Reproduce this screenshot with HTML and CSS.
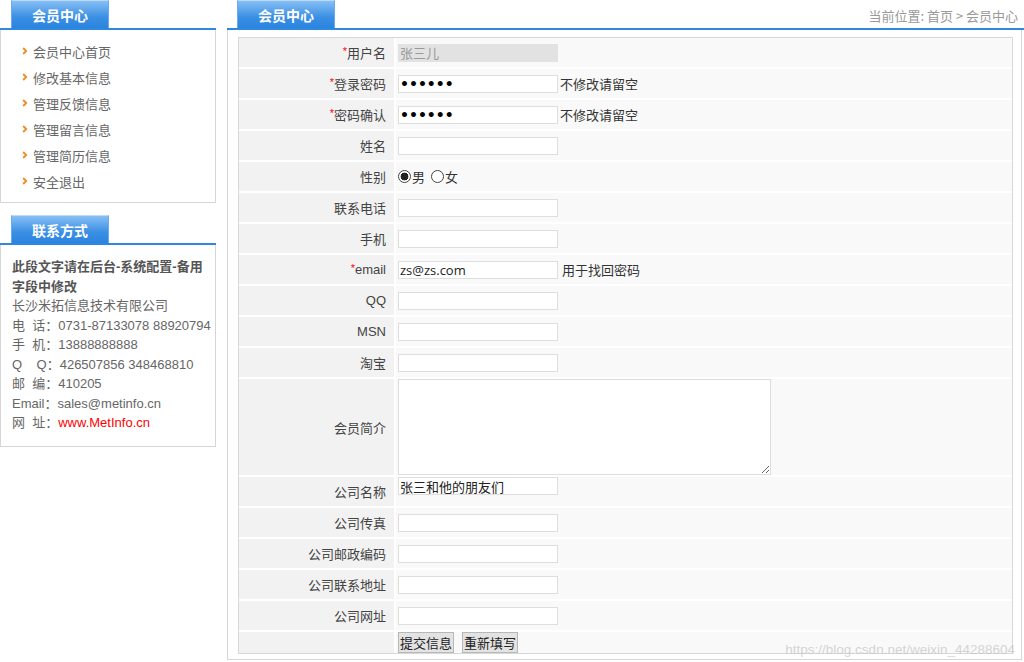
FILE: index.html
```html
<!DOCTYPE html>
<html lang="zh-CN">
<head>
<meta charset="utf-8">
<title>会员中心</title>
<link rel="stylesheet" href="styles.css">
</head>
<body>
<div class="page">
  <aside class="sidebar">
    <section class="panel">
      <div class="panel-head"><span class="tab">会员中心</span></div>
      <ul class="menu">
        <li><svg class="arrow" viewBox="0 0 6 8" width="6" height="8"><path d="M1.2 1 L4.2 4 L1.2 7" fill="none" stroke="#f08a1e" stroke-width="1.8"/></svg>会员中心首页</li>
        <li><svg class="arrow" viewBox="0 0 6 8" width="6" height="8"><path d="M1.2 1 L4.2 4 L1.2 7" fill="none" stroke="#f08a1e" stroke-width="1.8"/></svg>修改基本信息</li>
        <li><svg class="arrow" viewBox="0 0 6 8" width="6" height="8"><path d="M1.2 1 L4.2 4 L1.2 7" fill="none" stroke="#f08a1e" stroke-width="1.8"/></svg>管理反馈信息</li>
        <li><svg class="arrow" viewBox="0 0 6 8" width="6" height="8"><path d="M1.2 1 L4.2 4 L1.2 7" fill="none" stroke="#f08a1e" stroke-width="1.8"/></svg>管理留言信息</li>
        <li><svg class="arrow" viewBox="0 0 6 8" width="6" height="8"><path d="M1.2 1 L4.2 4 L1.2 7" fill="none" stroke="#f08a1e" stroke-width="1.8"/></svg>管理简历信息</li>
        <li><svg class="arrow" viewBox="0 0 6 8" width="6" height="8"><path d="M1.2 1 L4.2 4 L1.2 7" fill="none" stroke="#f08a1e" stroke-width="1.8"/></svg>安全退出</li>
      </ul>
    </section>
    <section class="panel panel-contact">
      <div class="panel-head"><span class="tab">联系方式</span></div>
      <div class="contact">
        <p class="contact-note">此段文字请在后台-系统配置-备用字段中修改</p>
        <p>长沙米拓信息技术有限公司</p>
        <p class="nowrap">电&nbsp;&nbsp;话：0731-87133078 88920794</p>
        <p class="nowrap">手&nbsp;&nbsp;机：13888888888</p>
        <p class="nowrap">Q&nbsp;&nbsp;&nbsp;&nbsp;Q：426507856 348468810</p>
        <p class="nowrap">邮&nbsp;&nbsp;编：410205</p>
        <p class="nowrap">Email：sales@metinfo.cn</p>
        <p class="nowrap">网&nbsp;&nbsp;址：<span class="link">www.MetInfo.cn</span></p>
      </div>
    </section>
  </aside>

  <main class="main">
    <div class="main-head">
      <span class="tab">会员中心</span>
      <span class="crumb">当前位置: 首页 &gt; 会员中心</span>
    </div>
    <div class="main-box">
      <form class="form-grid">
        <div class="lbl"><span class="star">*</span>用户名</div>
        <div class="val"><input class="inp inp-disabled" type="text" value="张三儿" disabled></div>

        <div class="lbl"><span class="star">*</span>登录密码</div>
        <div class="val"><input class="inp inp-pass" type="password" value="123456"><span class="hint">不修改请留空</span></div>

        <div class="lbl"><span class="star">*</span>密码确认</div>
        <div class="val"><input class="inp inp-pass" type="password" value="123456"><span class="hint">不修改请留空</span></div>

        <div class="lbl">姓名</div>
        <div class="val"><input class="inp" type="text"></div>

        <div class="lbl">性别</div>
        <div class="val"><label class="radio"><input type="radio" name="sex" checked>男</label><label class="radio"><input type="radio" name="sex">女</label></div>

        <div class="lbl">联系电话</div>
        <div class="val"><input class="inp" type="text"></div>

        <div class="lbl">手机</div>
        <div class="val"><input class="inp" type="text"></div>

        <div class="lbl"><span class="star">*</span>email</div>
        <div class="val"><input class="inp" type="text" value="zs@zs.com"><span class="hint hint-wide">用于找回密码</span></div>

        <div class="lbl">QQ</div>
        <div class="val"><input class="inp" type="text"></div>

        <div class="lbl">MSN</div>
        <div class="val"><input class="inp" type="text"></div>

        <div class="lbl">淘宝</div>
        <div class="val"><input class="inp" type="text"></div>

        <div class="lbl lbl-tall">会员简介</div>
        <div class="val val-tall"><textarea class="txt"></textarea></div>

        <div class="lbl">公司名称</div>
        <div class="val val-top"><input class="inp" type="text" value="张三和他的朋友们"></div>

        <div class="lbl">公司传真</div>
        <div class="val"><input class="inp" type="text"></div>

        <div class="lbl">公司邮政编码</div>
        <div class="val"><input class="inp" type="text"></div>

        <div class="lbl">公司联系地址</div>
        <div class="val"><input class="inp" type="text"></div>

        <div class="lbl">公司网址</div>
        <div class="val"><input class="inp" type="text"></div>

        <div class="lbl lbl-btn"></div>
        <div class="val val-btn"><button type="button" class="btn">提交信息</button><button type="button" class="btn">重新填写</button></div>
      </form>
    </div>
  </main>
  <div class="watermark">https://blog.csdn.net/weixin_44288604</div>
</div>
</body>
</html>
```

FILE: styles.css
```css
* { box-sizing: border-box; }

body {
  margin: 0;
  background: #fff;
  font-family: "Liberation Sans", "Noto Sans CJK SC", sans-serif;
  font-size: 13px;
  color: #555;
}

.page {
  position: relative;
  display: flex;
  gap: 11px;
  width: 1024px;
  height: 662px;
  overflow: hidden;
}

/* ---------- tabs ---------- */
.tab {
  display: flex;
  align-items: center;
  justify-content: center;
  width: 98px;
  height: 28px;
  padding-top: 1px;
  background: linear-gradient(#86bff5, #3b8fe3 60%, #2a84df);
  border: 1px solid #6aaaf0;
  border-top-color: #b9dafa;
  border-bottom: none;
  color: #fff;
  font-weight: bold;
  font-size: 14px;
  font-family: "Noto Sans CJK SC", sans-serif;
}

/* ---------- sidebar ---------- */
.sidebar {
  flex: none;
  width: 216px;
}

.panel-head {
  display: flex;
  height: 30px;
  padding-left: 11px;
  border-bottom: 2px solid #2f87e0;
}

.menu {
  list-style: none;
  margin: 0;
  padding: 8px 0 8px 21px;
  border: 1px solid #d6d6d6;
  border-top: none;
}

.menu li {
  display: flex;
  align-items: center;
  height: 26px;
  color: #666;
  font-family: "Noto Sans CJK SC", sans-serif;
  font-size: 13px;
}

.arrow {
  flex: none;
  margin-right: 5px;
}

.panel-contact {
  margin-top: 12px;
}

.contact {
  padding: 12px 8px 13px 11px;
  border: 1px solid #d6d6d6;
  border-top: none;
  color: #666;
}

.contact p {
  margin: 0;
  line-height: 19.5px;
}

.contact .nowrap {
  white-space: nowrap;
}

.contact .contact-note {
  font-weight: bold;
  color: #555;
}

.link {
  color: #f00;
}

/* ---------- main ---------- */
.main {
  flex: 1;
  min-width: 0;
}

.main-head {
  display: flex;
  justify-content: space-between;
  height: 30px;
  padding: 0 6px 0 10px;
  border-bottom: 2px solid #2f87e0;
}

.crumb {
  align-self: center;
  padding-top: 3px;
  color: #999;
  font-family: "Noto Sans CJK SC", sans-serif;
  font-size: 13px;
}

.main-box {
  margin-right: 2px;
  padding: 7px 8px 5px 10px;
  border: 1px solid #d6d6d6;
  border-top: none;
}

.form-grid {
  display: grid;
  grid-template-columns: 155px 1fr;
  gap: 2px;
  margin: 0;
  border: 1px solid #d8d8d8;
  background: #fff;
}

.lbl,
.val {
  display: flex;
  align-items: center;
  height: 29px;
}

.lbl {
  justify-content: flex-end;
  padding-right: 8px;
  background: #f2f2f2;
  color: #444;
  font-family: "Liberation Sans", "Noto Sans CJK SC", sans-serif;
}

.val {
  padding-left: 2px;
  background: #f9f9f9;
  color: #333;
}

.lbl-tall,
.val-tall {
  height: 96px;
}

.val-top {
  align-items: flex-start;
}

.lbl-btn,
.val-btn {
  height: 21px;
}

.star {
  color: #f00;
  font-size: 11px;
  align-self: flex-start;
  margin-top: 7px;
}

.inp {
  width: 160px;
  height: 18px;
  margin: 0;
  padding: 0 1px;
  border: 1px solid #dedede;
  background: #fff;
  color: #222;
  font-family: "Open Sans", "Noto Sans CJK SC", sans-serif;
  font-size: 13px;
  outline: none;
}

.inp-disabled {
  background: #e2e2e2;
  border-color: #e2e2e2;
  color: #999;
}

.inp-pass {
  font-size: 14px;
  font-family: "DejaVu Sans", sans-serif;
  font-weight: bold;
  color: #000;
}

.hint {
  margin-left: 2px;
  color: #333;
  font-family: "Noto Sans CJK SC", sans-serif;
}

.hint-wide {
  margin-left: 4px;
}

.radio {
  display: flex;
  align-items: center;
  margin-right: 6px;
  color: #333;
  font-family: "Noto Sans CJK SC", sans-serif;
}

.radio input {
  appearance: none;
  width: 13px;
  height: 13px;
  margin: 0 1px 0 0;
  border: 1px solid #444;
  border-radius: 50%;
  background: #fff;
}

.radio input:checked {
  background: radial-gradient(circle, #222 0 3.6px, #fff 4.2px);
}

.txt {
  display: block;
  width: 373px;
  height: 96px;
  margin: 0;
  border: 1px solid #dedede;
  background: #fff;
  resize: both;
}

.btn {
  height: 21px;
  margin: 0 8px 0 0;
  padding: 0 1px;
  border: 1px solid #b8b8b8;
  background: #e3e3e3;
  color: #222;
  font-family: "Noto Sans CJK SC", sans-serif;
  font-size: 13px;
  line-height: 18px;
}

.watermark {
  position: absolute;
  right: 9px;
  bottom: 5px;
  color: rgba(195, 195, 195, 0.7);
  font-family: "Liberation Sans", sans-serif;
  font-size: 13.5px;
}
```
